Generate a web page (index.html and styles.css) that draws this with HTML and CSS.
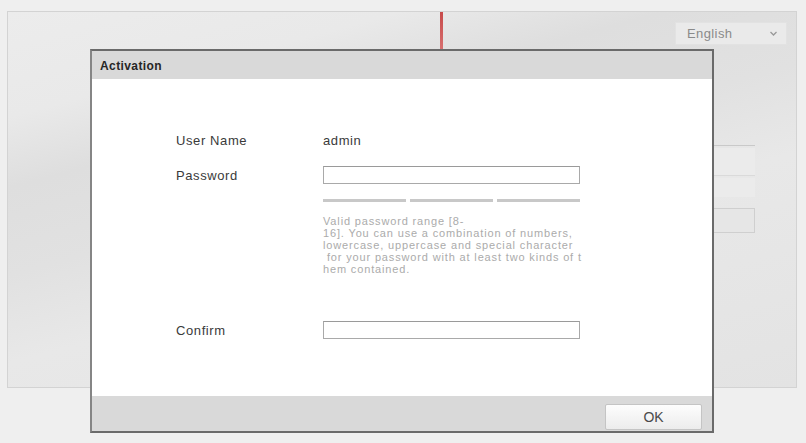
FILE: index.html
```html
<!DOCTYPE html>
<html lang="en">
<head>
<meta charset="utf-8">
<title>Activation</title>
<link rel="stylesheet" href="styles.css">
</head>
<body>
<div class="page">
  <div class="panel">
    <div class="header">
      <div class="redline"></div>
      <div class="lang">
        <span class="lang-text">English</span>
        <svg class="chev" width="7" height="5" viewBox="0 0 7 5"><path d="M0.5 1 L3.5 4 L6.5 1" fill="none" stroke="#999" stroke-width="1.3"/></svg>
      </div>
    </div>
    <div class="login">
      <div class="field f1"></div>
      <div class="field f2"></div>
      <div class="field f3"></div>
    </div>
  </div>

  <div class="dialog">
    <div class="titlebar">Activation</div>
    <div class="body">
      <div class="row r1">
        <div class="label">User Name</div>
        <div class="value">admin</div>
      </div>
      <div class="row r2">
        <div class="label">Password</div>
        <div class="input"></div>
      </div>
      <div class="strength">
        <div class="bar"></div>
        <div class="bar"></div>
        <div class="bar"></div>
      </div>
      <p class="help">Valid password range [8-<br>16]. You can use a combination of numbers,<br>lowercase, uppercase and special character<br>&nbsp;for your password with at least two kinds of t<br>hem contained.</p>
      <div class="row r3">
        <div class="label">Confirm</div>
        <div class="input"></div>
      </div>
    </div>
    <div class="footer">
      <button class="ok">OK</button>
    </div>
  </div>
</div>
</body>
</html>
```

FILE: styles.css
```css
* { box-sizing: border-box; }
html, body { margin: 0; padding: 0; }
body {
  background: #efefef;
  font-family: "Liberation Sans", Arial, sans-serif;
}
.page {
  position: relative;
  width: 806px;
  height: 443px;
  padding: 11px 0 0 7px;
  overflow: hidden;
}
.panel {
  width: 790px;
  height: 377px;
  border: 1px solid #d3d3d3;
  background: linear-gradient(165deg, #ececec 0%, #e9e9e9 18%, #dedede 30%, #e1e1e1 45%, #e8e8e8 60%, #e3e3e3 100%);
  display: flex;
  flex-direction: column;
}
.header {
  display: flex;
  align-items: flex-start;
  padding-left: 432px;
  height: 38px;
}
.redline {
  width: 3px;
  height: 38px;
  background: linear-gradient(#c74a4a, #d87070);
}
.lang {
  margin-left: auto;
  margin-right: 9px;
  margin-top: 10px;
  width: 112px;
  height: 23px;
  background: #eaeaea;
  border: 1px solid #e2e2e2;
  display: flex;
  align-items: center;
  padding: 0 9px 0 11px;
}
.lang-text {
  font-size: 13px;
  color: #8a8a8a;
  letter-spacing: 0.4px;
}
.chev { margin-left: auto; }
.login {
  margin-left: auto;
  margin-right: 41px;
  margin-top: 95px;
  width: 260px;
  border-top: 1px solid #c9c9c9;
}
.field { width: 100%; }
.f1 { margin-top: 2px; height: 28px; background: #ebebeb; border-bottom: 1px solid #dadada; }
.f2 { margin-top: 2px; height: 19px; background: #ebebeb; }
.f3 { margin-top: 11px; height: 25px; background: #e6e6e6; border: 1px solid #cfcfcf; }

.dialog {
  position: absolute;
  left: 90px;
  top: 49px;
  width: 624px;
  height: 384px;
  border: 2px solid #6a6a6a;
  border-left-color: #858585;
  display: flex;
  flex-direction: column;
  background: #fff;
}
.titlebar {
  height: 28px;
  background: #d9d9d9;
  font-size: 12px;
  font-weight: bold;
  color: #262626;
  letter-spacing: 0.4px;
  padding-left: 8px;
  display: flex;
  align-items: center;
  padding-top: 1px;
}
.body {
  height: 317px;
  background: #fff;
  padding-left: 84px;
}
.row {
  display: flex;
  align-items: center;
}
.label {
  width: 147px;
  font-size: 13px;
  color: #3a3a3a;
  letter-spacing: 0.6px;
}
.value {
  font-size: 13px;
  color: #3a3a3a;
  letter-spacing: 0.6px;
}
.r1 { margin-top: 51px; height: 20px; }
.r2 { margin-top: 16px; height: 18px; }
.r3 { margin-top: 46px; height: 18px; }
.input {
  width: 257px;
  height: 18px;
  border: 1px solid #a9a9a9;
  border-top-color: #9a9a9a;
  background: #fff;
}
.strength {
  margin-top: 15px;
  margin-left: 147px;
  width: 257px;
  display: flex;
  gap: 4px;
}
.bar {
  flex: 1;
  height: 3px;
  background: #c8c8c8;
}
.help {
  margin: 13px 0 0 147px;
  font-size: 11px;
  line-height: 12px;
  color: #ababab;
  letter-spacing: 0.85px;
  white-space: nowrap;
}
.footer {
  flex: 1;
  background: #d9d9d9;
  display: flex;
  justify-content: flex-end;
  align-items: flex-start;
  padding: 8px 10px 0 0;
}
.ok {
  width: 97px;
  height: 26px;
  border: 1px solid #c4c4c4;
  border-radius: 2px;
  background: linear-gradient(#fdfdfd, #ececec);
  font-family: "Liberation Sans", Arial, sans-serif;
  font-size: 14px;
  color: #4a4a4a;
  padding: 0;
}
```
